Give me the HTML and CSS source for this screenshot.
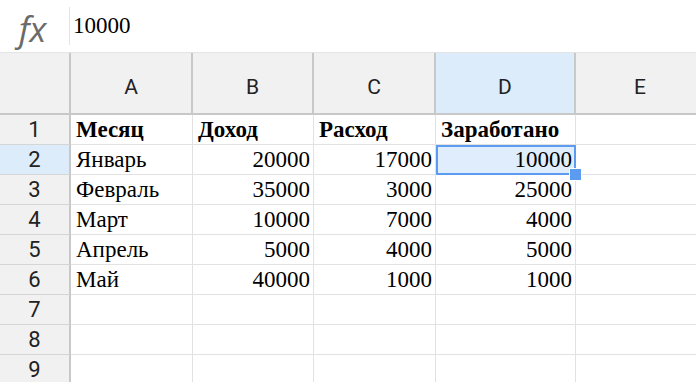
FILE: index.html
```html
<!DOCTYPE html>
<html lang="ru">
<head>
    <meta charset="UTF-8">
    <title>Sheet</title>
    <link rel="stylesheet" href="styles.css">
</head>
<body>
    <div class="formula-bar">
        <div class="fx-icon">fx</div>
        <div class="formula-input">10000</div>
    </div>

    <div class="sheet">
        <div class="hdr corner"></div>
        <div class="hdr col">A</div>
        <div class="hdr col">B</div>
        <div class="hdr col">C</div>
        <div class="hdr col active">D</div>
        <div class="hdr col">E</div>

        <div class="hdr row">1</div>
        <div class="cell bold">Месяц</div>
        <div class="cell bold">Доход</div>
        <div class="cell bold">Расход</div>
        <div class="cell bold">Заработано</div>
        <div class="cell"></div>

        <div class="hdr row active">2</div>
        <div class="cell">Январь</div>
        <div class="cell num">20000</div>
        <div class="cell num">17000</div>
        <div class="cell num selected">10000<span class="handle"></span></div>
        <div class="cell"></div>

        <div class="hdr row">3</div>
        <div class="cell">Февраль</div>
        <div class="cell num">35000</div>
        <div class="cell num">3000</div>
        <div class="cell num">25000</div>
        <div class="cell"></div>

        <div class="hdr row">4</div>
        <div class="cell">Март</div>
        <div class="cell num">10000</div>
        <div class="cell num">7000</div>
        <div class="cell num">4000</div>
        <div class="cell"></div>

        <div class="hdr row">5</div>
        <div class="cell">Апрель</div>
        <div class="cell num">5000</div>
        <div class="cell num">4000</div>
        <div class="cell num">5000</div>
        <div class="cell"></div>

        <div class="hdr row">6</div>
        <div class="cell">Май</div>
        <div class="cell num">40000</div>
        <div class="cell num">1000</div>
        <div class="cell num">1000</div>
        <div class="cell"></div>

        <div class="hdr row">7</div>
        <div class="cell"></div>
        <div class="cell"></div>
        <div class="cell"></div>
        <div class="cell"></div>
        <div class="cell"></div>

        <div class="hdr row">8</div>
        <div class="cell"></div>
        <div class="cell"></div>
        <div class="cell"></div>
        <div class="cell"></div>
        <div class="cell"></div>

        <div class="hdr row">9</div>
        <div class="cell"></div>
        <div class="cell"></div>
        <div class="cell"></div>
        <div class="cell"></div>
        <div class="cell"></div>
    </div>
</body>
</html>
```

FILE: styles.css
```css
body {
    margin: 0;
    padding: 0;
    background: #ffffff;
    overflow: hidden;
}
.formula-bar {
    display: flex;
    align-items: center;
    height: 53px;
    border-bottom: 1px solid #e4e4e4;
    box-sizing: border-box;
}
.fx-icon {
    width: 70px;
    height: 38px;
    display: flex;
    align-items: center;
    justify-content: center;
    font-family: 'Open Sans', sans-serif;
    font-style: italic;
    font-size: 35px;
    color: #6b6b6b;
    border-right: 1px solid #e4e4e4;
    padding-right: 4px;
    padding-top: 4px;
    box-sizing: border-box;
}
.formula-input {
    padding-left: 3px;
    font-family: 'Liberation Serif', serif;
    font-size: 23px;
    color: #000;
}
.sheet {
    display: grid;
    grid-template-columns: 71px 122px 121px 122px 140px 130px;
    grid-template-rows: 62px repeat(9, 30px);
}
.hdr {
    background: #f1f1f1;
    font-family: 'Roboto', 'Liberation Sans', sans-serif;
    font-size: 21px;
    color: #222;
    display: flex;
    align-items: center;
    justify-content: center;
    box-sizing: border-box;
}
.hdr.col {
    border-right: 2px solid #c8c8c8;
    border-bottom: 2px solid #c8c8c8;
    padding-top: 8px;
}
.hdr.corner {
    border-right: 2px solid #c8c8c8;
    border-bottom: 2px solid #c8c8c8;
}
.hdr.row {
    border-right: 2px solid #c8c8c8;
    border-bottom: 1px solid #d6d6d6;
    font-size: 22px;
}
.hdr.active {
    background: #dcecfb;
}
.cell {
    position: relative;
    font-family: 'Liberation Serif', serif;
    font-size: 23px;
    color: #000;
    display: flex;
    align-items: center;
    padding: 0 3px 0 5px;
    border-right: 1px solid #e2e2e2;
    border-bottom: 1px solid #e2e2e2;
    box-sizing: border-box;
    white-space: nowrap;
}
.cell.bold {
    font-weight: bold;
}
.cell.num {
    justify-content: flex-end;
}
.cell.selected {
    background: #dfedfc;
    outline: 2px solid #5b9cf0;
    outline-offset: -2px;
    z-index: 1;
}
.handle {
    position: absolute;
    right: -7px;
    bottom: -7px;
    width: 11px;
    height: 11px;
    background: #5b9cf0;
    border: 1px solid #fff;
}
```
